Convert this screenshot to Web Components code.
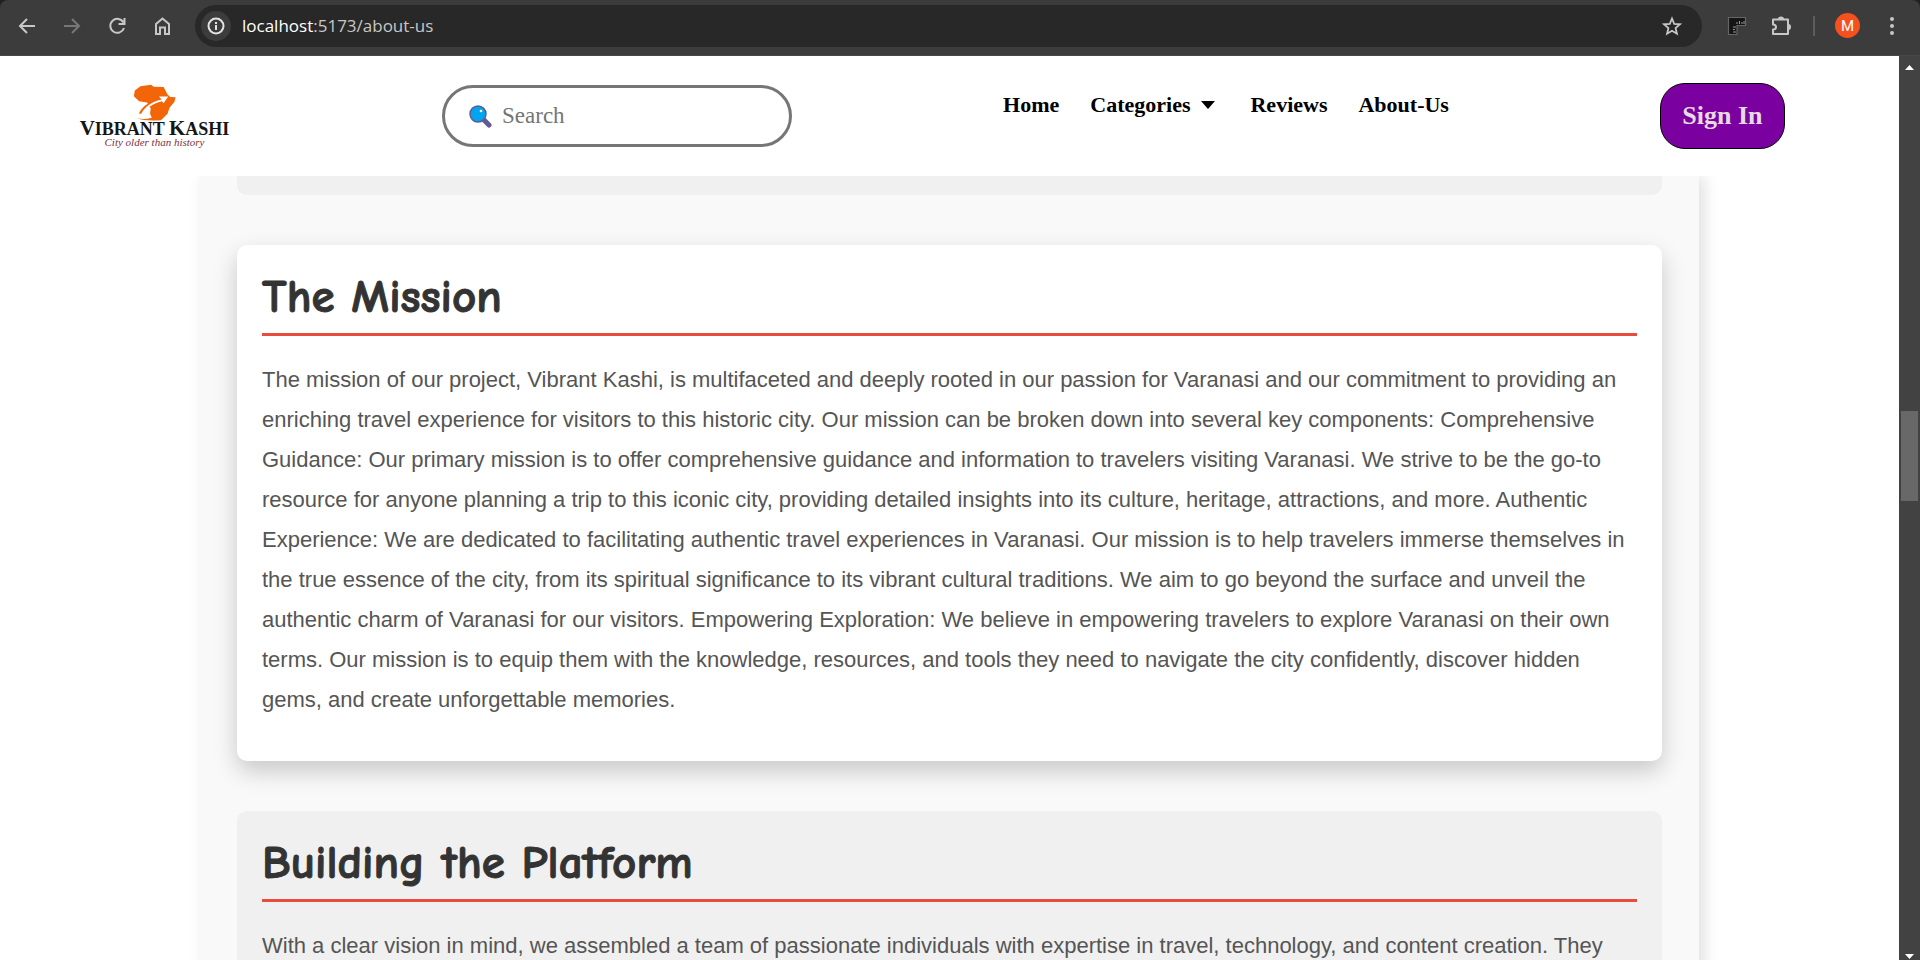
<!DOCTYPE html>
<html lang="en">
<head>
<meta charset="utf-8">
<title>Vibrant Kashi</title>
<style>
  body { margin: 0; background: #202020; }
</style>
</head>
<body>
<browser-window>
  <browser-toolbar slot="toolbar"></browser-toolbar>
  <site-header slot="header"></site-header>
  <about-page>
    <about-card tail></about-card>
    <about-card raised>
      <span slot="title">The Mission</span>
      The mission of our project, Vibrant Kashi, is multifaceted and deeply rooted in our passion for Varanasi and our commitment to providing an enriching travel experience for visitors to this historic city. Our mission can be broken down into several key components: Comprehensive Guidance: Our primary mission is to offer comprehensive guidance and information to travelers visiting Varanasi. We strive to be the go-to resource for anyone planning a trip to this iconic city, providing detailed insights into its culture, heritage, attractions, and more. Authentic Experience: We are dedicated to facilitating authentic travel experiences in Varanasi. Our mission is to help travelers immerse themselves in the true essence of the city, from its spiritual significance to its vibrant cultural traditions. We aim to go beyond the surface and unveil the authentic charm of Varanasi for our visitors. Empowering Exploration: We believe in empowering travelers to explore Varanasi on their own terms. Our mission is to equip them with the knowledge, resources, and tools they need to navigate the city confidently, discover hidden gems, and create unforgettable memories.
    </about-card>
    <about-card>
      <span slot="title">Building the Platform</span>
      With a clear vision in mind, we assembled a team of passionate individuals with expertise in travel, technology, and content creation. They
    </about-card>
  </about-page>
  <scroll-track slot="scrollbar"></scroll-track>
</browser-window>

<script>
const define = (name, html) => customElements.define(name, class extends HTMLElement {
  constructor() {
    super();
    const template = document.createElement('template');
    template.innerHTML = html;
    this.attachShadow({ mode: 'open' }).append(template.content.cloneNode(true));
  }
});

define('browser-window', `
  <style>
    :host { display: grid; grid-template: auto minmax(0, 1fr) / minmax(0, 1fr) auto; height: 100vh; overflow: hidden; }
    .toolbar { grid-column: 1 / -1; }
    main { background: #fff; display: flex; flex-direction: column; overflow: hidden; }
    .page { flex: 1; min-height: 0; overflow: hidden; }
  </style>
  <div class="toolbar"><slot name="toolbar"></slot></div>
  <main><slot name="header"></slot><div class="page"><slot></slot></div></main>
  <slot name="scrollbar"></slot>
`);

define('browser-toolbar', `
  <style>
    :host { display: flex; align-items: center; box-sizing: border-box; height: 56px; padding: 0 16px 4px 15px;
      background: #3c3c3c; border-bottom: 1px solid #474747; border-radius: 8px 8px 0 0; color: #c7c7c7; }
    button { display: grid; place-items: center; width: 24px; height: 24px; padding: 0; border: 0; background: none; color: inherit; }
    svg { display: block; fill: none; stroke: currentColor; stroke-width: 2; }
    .nav { display: flex; gap: 21px; padding-right: 21px; }
    .dim { color: #777; }
    form { flex: 1; display: flex; align-items: center; box-sizing: border-box; height: 42px; padding: 0 18px 0 6px; border-radius: 21px; background: #282828; }
    form .info { width: 30px; height: 30px; border-radius: 50%; background: #3c3c3c; color: #e3e3e3; }
    .address { flex: 1; padding-left: 11px; font: 17px/24px "Open Sans", "Noto Sans", sans-serif; color: #c7c7c7; }
    .address b { font-weight: 400; color: #fff; }
    .tools { display: flex; align-items: center; gap: 20px; padding-left: 23px; }
    .tools hr { width: 2px; height: 20px; margin: 0; border: 0; background: #5c5c5c; }
    .tools .avatar { width: 25px; height: 25px; border-radius: 50%; background: #f4511e; color: #fff; font: 15px/24px Roboto, sans-serif; }
  </style>
  <div class="nav">
    <button aria-label="Back"><svg width="24" height="24"><path d="M20 12H5.500M12 5l-7 7 7 7"/></svg></button>
    <button aria-label="Forward" class="dim"><svg width="24" height="24"><path d="M4 12h14.500M12 5l7 7-7 7"/></svg></button>
    <button aria-label="Reload"><svg width="24" height="24"><path d="M18.500 8.500A7 7 0 1 0 19 14M19.500 4v6h-6"/></svg></button>
    <button aria-label="Home"><svg width="24" height="24"><path d="M6 20V10l6.500-5.500L19 10v10h-4v-6.500h-5V20z"/></svg></button>
  </div>
  <form>
    <button type="button" class="info" aria-label="Site information"><svg width="20" height="20"><circle cx="10" cy="10" r="7.500"/><path d="M10 9v5M10 6v2"/></svg></button>
    <span class="address"><b>localhost</b>:5173/about-us</span>
    <button type="button" aria-label="Bookmark"><svg width="24" height="24"><path d="M12 4.500l2.200 5.300 5.800.500-4.400 3.800 1.300 5.600L12 16.700l-4.900 3 1.300-5.600L4 10.300l5.800-.500z" stroke-width="1.800"/></svg></button>
  </form>
  <div class="tools">
    <button aria-label="Ruler"><svg width="24" height="24"><path d="M3.500 3.500h17v8h-8.500v9H3.500z" fill="#151515" stroke="#666" stroke-width="1.200"/><path d="M8 18h3M8 15.500h2M8 13h3M12 10V8M14.500 10V7M17 10V8M19 10V7" stroke="#999" stroke-width="1"/></svg></button>
    <button aria-label="Extensions"><svg width="24" height="24"><path d="M4 5.500h15V20H4v-4.500c4 0 4-5 0-5z" stroke-linejoin="round"/><path d="M9 5a3 2.500 0 0 1 6 0zM19.500 10a2.500 3 0 0 1 0 6z" fill="currentColor" stroke="none"/></svg></button>
    <hr>
    <button class="avatar" aria-label="Profile">M</button>
    <button aria-label="Menu"><svg width="24" height="24"><g fill="currentColor" stroke="none"><circle cx="12" cy="5" r="2"/><circle cx="12" cy="12" r="2"/><circle cx="12" cy="19" r="2"/></g></svg></button>
  </div>
`);

define('site-logo', `
  <style>
    :host { display: block; width: 153px; }
    a { display: flex; flex-direction: column; align-items: center; text-decoration: none; }
    svg { display: block; }
    .name { font: bold 18px/14px "Liberation Serif", serif; color: #161616; white-space: nowrap; }
    .name b { font-size: 21px; }
    .tag { font: italic 11px/13px "Liberation Serif", serif; color: #80303c; white-space: nowrap; }
  </style>
  <a href="#home">
    <svg width="44" height="37" viewBox="178 18 132 112">
      <path fill="#f26508" d="M183 38 200 25 232 20 240 26 270 27 282 50 290 57 306 58 303 72 288 90 282 108 262 128H238L229 108 231 92 220 74 196 70 180 55z"/>
      <path fill="#fff" d="M200 110C210 88 232 72 264 65L256 56 284 56 270 76 265 70C236 78 214 92 206 112z"/>
      <path fill="#f26508" d="M195 108C206 86 224 74 244 69 224 82 210 92 202 108zM188 121C212 127 236 122 246 114L258 128C236 128 208 130 188 121z"/>
    </svg>
    <span class="name"><b>V</b>IBRANT <b>K</b>ASHI</span>
    <span class="tag">City older than history</span>
  </a>
`);

define('site-header', `
  <style>
    :host { display: flex; align-items: center; justify-content: space-between; flex: none; box-sizing: border-box; height: 120px;
      padding: 0 114px 0 78px; background: #fff; font-family: "Liberation Serif", serif; }
    label { display: flex; align-items: center; gap: 10px; box-sizing: border-box; width: 350px; height: 62px; padding: 0 24px;
      border: 3px solid #767676; border-radius: 31px; }
    label svg { flex: none; display: block; }
    input { flex: 1; min-width: 0; padding: 0; border: 0; outline: 0; background: none; font: 23px/26px "Liberation Serif", serif; }
    input::placeholder { color: #757575; }
    nav { display: flex; gap: 31px; margin-bottom: 22px; font: bold 22px/26px "Liberation Serif", serif; }
    a { color: #000; text-decoration: none; display: flex; align-items: center; }
    .more { gap: 11px; padding-right: 4px; }
    .signin { height: 66px; width: 125px; padding: 0; border: 1px solid #000; border-radius: 25px; background: #7a00a0; color: #e6dbe0;
      font: bold 26px/30px "Liberation Serif", serif; }
  </style>
  <site-logo></site-logo>
  <label aria-label="Search">
    <svg width="23" height="23" viewBox="0 0 23 23"><path d="M15 15l5 5" stroke="#635994" stroke-width="5" stroke-linecap="round"/><circle cx="9" cy="9" r="8" fill="#00a6ed" stroke="#635994" stroke-width="1.500"/><circle cx="12" cy="6" r="1.300" fill="#fff"/></svg>
    <input type="text" placeholder="Search">
  </label>
  <nav>
    <a href="#home">Home</a>
    <a href="#categories" class="more">Categories <svg width="14" height="8"><path d="M0 0h14L7 8z"/></svg></a>
    <a href="#reviews">Reviews</a>
    <a href="#about">About-Us</a>
  </nav>
  <button class="signin">Sign In</button>
`);

define('about-page', `
  <style>
    :host { display: flex; flex-direction: column; gap: 50px; box-sizing: border-box; max-width: 1499px; margin: 0 auto; padding: 0 37px 50px;
      background: #f9f9f9; box-shadow: 5px 0 15px rgba(0, 0, 0, .13); }
  </style>
  <slot></slot>
`);

define('about-card', `
  <style>
    :host { display: block; padding: 25px; border-radius: 10px; background: #f0f0f0; }
    :host([raised]) { background: #fff; box-shadow: 0 10px 25px rgba(0, 0, 0, .2); }
    :host([tail]) { height: 19px; padding: 0; border-radius: 0 0 10px 10px; }
    :host([tail]) * { display: none; }
    h2 { margin: 0 0 24px; padding-bottom: 9px; border-bottom: 3px solid #e74c3c; color: #333;
      font: bold 47px/54px "Comic Sans MS", "Comic Neue", cursive; font-variant-ligatures: none;
      -webkit-text-stroke: 1px #333; }
    p { margin: 0 0 16px; color: #555; font: 22px/40px "Liberation Sans", sans-serif; }
  </style>
  <h2><slot name="title"></slot></h2>
  <p><slot></slot></p>
`);

define('scroll-track', `
  <style>
    :host { display: flex; flex-direction: column; align-items: center; box-sizing: border-box; width: 21px; padding: 9px 0 1px; background: #424242; }
    i { width: 17px; height: 90px; background: #686868; }
    .above { flex: 341; }
    .below { flex: 453; }
    svg { display: block; fill: #fff; }
  </style>
  <svg width="9" height="5"><path d="M0 5 4.500 0 9 5z"/></svg>
  <span class="above"></span><i></i><span class="below"></span>
  <svg width="9" height="5"><path d="M0 0h9L4.500 5z"/></svg>
`);
</script>
</body>
</html>
